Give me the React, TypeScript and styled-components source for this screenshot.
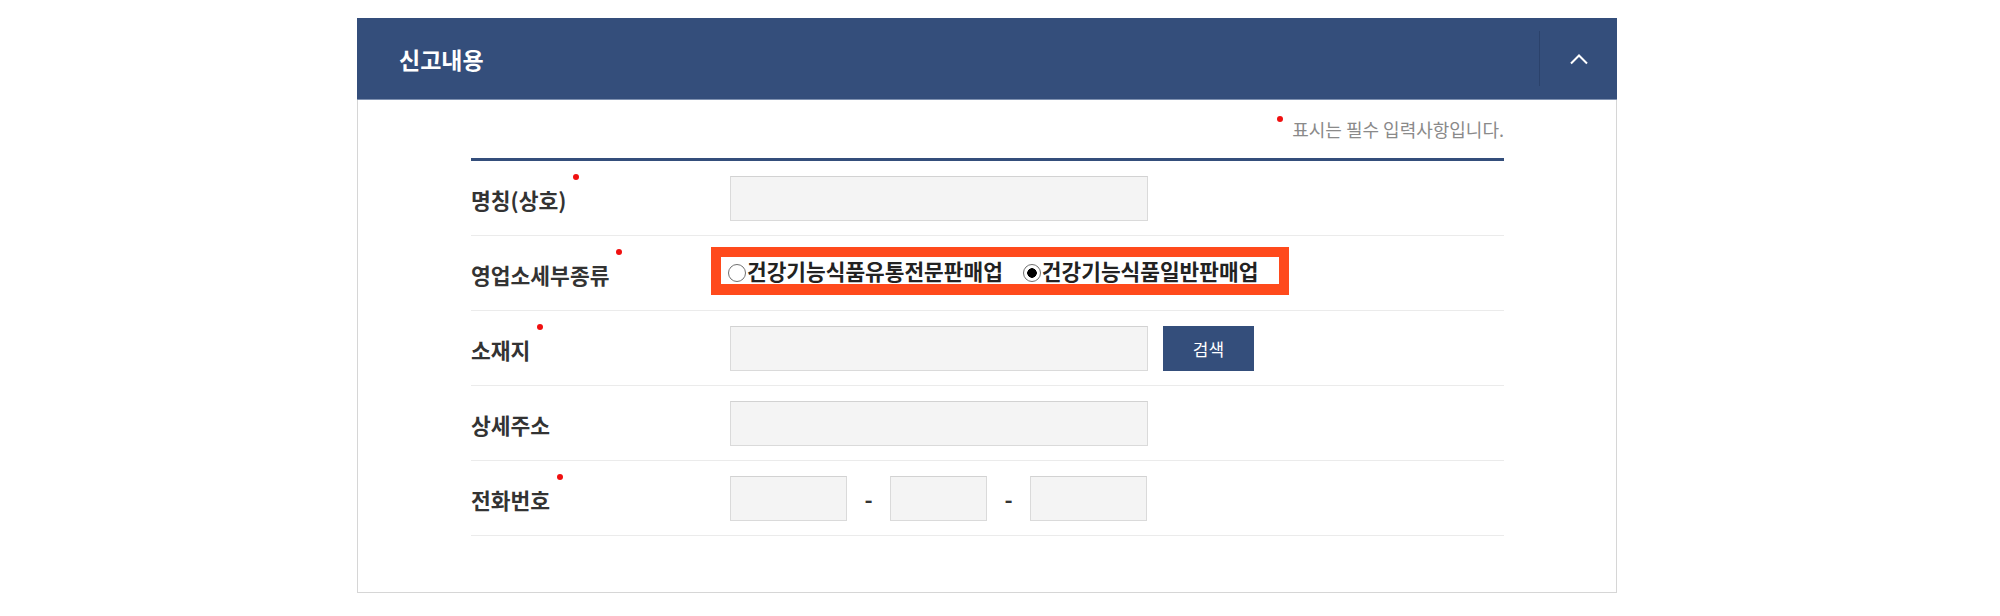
import styled, { createGlobalStyle, css } from "styled-components";

const GlobalStyle = createGlobalStyle`
    body {
        margin: 0;
        background: #ffffff;
        font-family: "Noto Sans CJK KR", "Noto Sans", sans-serif;
    }
`;

const navy = "#344e7b";

const redDot = css`
    content: "";
    position: absolute;
    width: 6px;
    height: 6px;
    border-radius: 50%;
    background-color: #f01010;
`;

const Page = styled.div`
    padding: 18px 0 0 357px;
`;

const Panel = styled.section`
    width: 1260px;
`;

const PanelHeader = styled.div`
    display: flex;
    align-items: center;
    justify-content: space-between;
    height: 82px;
    background-color: ${navy};
    border-bottom: 1px solid #7f91b0;
    box-sizing: border-box;
    padding-left: 42px;
`;

const Title = styled.h2`
    margin: 0;
    color: #ffffff;
    font-size: 23px;
    font-weight: 700;
`;

const HeaderTools = styled.div`
    display: flex;
    align-items: center;
    justify-content: center;
    width: 77px;
    height: 55px;
    border-left: 1px solid #2b426b;
`;

const ToggleButton = styled.button`
    display: flex;
    align-items: center;
    justify-content: center;
    background: none;
    border: 0;
    padding: 0;
    cursor: pointer;
`;

const PanelBody = styled.div`
    border: 1px solid #d6d6d6;
    border-top: 0;
    padding: 16px 0 56px;
`;

const FormArea = styled.div`
    width: 1033px;
    margin-left: 113px;
`;

const RequiredNote = styled.p`
    margin: 0 0 16px;
    text-align: right;
    font-size: 18px;
    line-height: 26px;
    color: #8a8a8a;
    > span {
        position: relative;
        &::before {
            ${redDot}
            left: -15px;
            top: 0;
        }
    }
`;

const FormTable = styled.div`
    border-top: 3px solid ${navy};
`;

const Row = styled.div`
    display: grid;
    grid-template-columns: 259px 1fr;
    align-items: center;
    height: 74px;
    border-bottom: 1px solid #ebebeb;
`;

const LabelCell = styled.div`
    padding-top: 4px;
`;

const Label = styled.span<{ $required?: boolean }>`
    position: relative;
    font-size: 21.5px;
    line-height: 28px;
    font-weight: 700;
    color: #333333;
    ${props => props.$required && css`
        &::after {
            ${redDot}
            right: -13px;
            top: -10px;
        }
    `}
`;

const Field = styled.div`
    display: flex;
    align-items: center;
`;

const TextInput = styled.input<{ $width?: number }>`
    box-sizing: border-box;
    width: ${props => (props.$width || 418) + "px"};
    height: 45px;
    background-color: #f4f4f4;
    border: 1px solid #dadada;
    border-top-color: #d2d2d2;
    padding: 0 10px;
    font-size: 16px;
    font-family: inherit;
    outline: none;
`;

const SearchButton = styled.button`
    width: 91px;
    height: 45px;
    margin-left: 15px;
    background-color: ${navy};
    border: 0;
    color: #ffffff;
    font-size: 17px;
    font-family: inherit;
    cursor: pointer;
`;

const Dash = styled.span`
    width: 43px;
    text-align: center;
    font-size: 22px;
    font-weight: 700;
    color: #333333;
`;

const RadioGroup = styled.div`
    display: flex;
    align-items: center;
    gap: 20px;
    margin: -4px 0 0 -19px;
    padding: 0 21px 0 7px;
    height: 27px;
    border: 10px solid #ff4a1c;
    border-bottom-width: 11px;
`;

const RadioOption = styled.label`
    display: flex;
    align-items: center;
    font-size: 21.4px;
    line-height: 27px;
    font-weight: 700;
    color: #222222;
    cursor: pointer;
`;

const Radio = styled.input.attrs({ type: "radio" })`
    appearance: none;
    box-sizing: border-box;
    width: 18px;
    height: 18px;
    margin: 4px 1px 0 0;
    border: 1px solid #707070;
    border-radius: 50%;
    background: #ffffff;
    &:checked {
        background: radial-gradient(circle, #000000 0 4.5px, #ffffff 5px);
    }
`;

function ChevronUp() {
    return (
        <svg width="20" height="12" viewBox="0 0 20 12" fill="none">
            <path d="M2 10.5 L10 2.5 L18 10.5" stroke="#ffffff" strokeWidth="2" />
        </svg>
    );
}

function App() {
    return <Page>
        <GlobalStyle />
        <Panel>
            <PanelHeader>
                <Title>신고내용</Title>
                <HeaderTools>
                    <ToggleButton aria-label="접기"><ChevronUp /></ToggleButton>
                </HeaderTools>
            </PanelHeader>
            <PanelBody>
                <FormArea>
                    <RequiredNote><span>표시는 필수 입력사항입니다.</span></RequiredNote>
                    <FormTable>
                        <Row>
                            <LabelCell><Label $required>명칭(상호)</Label></LabelCell>
                            <Field><TextInput /></Field>
                        </Row>
                        <Row>
                            <LabelCell><Label $required>영업소세부종류</Label></LabelCell>
                            <Field>
                                <RadioGroup>
                                    <RadioOption><Radio name="kind" />건강기능식품유통전문판매업</RadioOption>
                                    <RadioOption><Radio name="kind" defaultChecked />건강기능식품일반판매업</RadioOption>
                                </RadioGroup>
                            </Field>
                        </Row>
                        <Row>
                            <LabelCell><Label $required>소재지</Label></LabelCell>
                            <Field>
                                <TextInput />
                                <SearchButton>검색</SearchButton>
                            </Field>
                        </Row>
                        <Row>
                            <LabelCell><Label>상세주소</Label></LabelCell>
                            <Field><TextInput /></Field>
                        </Row>
                        <Row>
                            <LabelCell><Label $required>전화번호</Label></LabelCell>
                            <Field>
                                <TextInput $width={117} />
                                <Dash>-</Dash>
                                <TextInput $width={97} />
                                <Dash>-</Dash>
                                <TextInput $width={117} />
                            </Field>
                        </Row>
                    </FormTable>
                </FormArea>
            </PanelBody>
        </Panel>
    </Page>
}

export default App;
